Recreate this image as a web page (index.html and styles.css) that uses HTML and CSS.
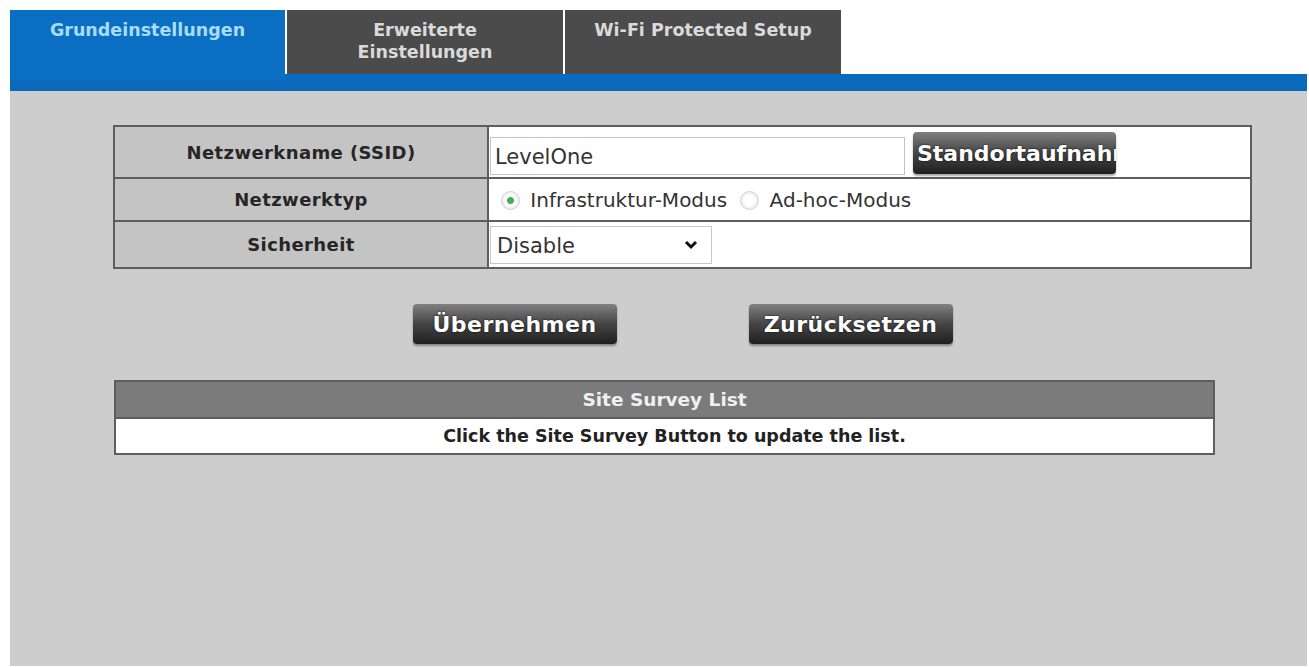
FILE: index.html
```html
<!DOCTYPE html>
<html lang="de">
<head>
    <meta charset="UTF-8">
    <title>Wireless Grundeinstellungen</title>
    <link rel="stylesheet" href="styles.css">
</head>
<body>
    <div class="page">
        <div class="tabs">
            <div class="tab active">Grundeinstellungen</div>
            <div class="tab">Erweiterte<br>Einstellungen</div>
            <div class="tab">Wi-Fi Protected Setup</div>
        </div>
        <div class="tab-bar"></div>

        <div class="content">
            <table class="settings">
                <tr class="row-ssid">
                    <th>Netzwerkname (SSID)</th>
                    <td>
                        <div class="cell-flex">
                            <input type="text" class="ssid" value="LevelOne">
                            <button type="button" class="btn btn-survey"><span>Standortaufnahme</span></button>
                        </div>
                    </td>
                </tr>
                <tr class="row-type">
                    <th>Netzwerktyp</th>
                    <td>
                        <label class="radio"><input type="radio" name="mode" checked> Infrastruktur-Modus</label>
                        <label class="radio"><input type="radio" name="mode"> Ad-hoc-Modus</label>
                    </td>
                </tr>
                <tr class="row-sec">
                    <th>Sicherheit</th>
                    <td>
                        <span class="select-wrap">
                            <select class="security">
                                <option>Disable</option>
                                <option>WEP</option>
                                <option>WPA-PSK</option>
                            </select>
                            <svg class="chevron" width="14" height="10" viewBox="0 0 14 10"><path d="M2 2 L7 7 L12 2" fill="none" stroke="#111" stroke-width="3"/></svg>
                        </span>
                    </td>
                </tr>
            </table>

            <div class="actions">
                <button type="button" class="btn btn-big">Übernehmen</button>
                <button type="button" class="btn btn-big">Zurücksetzen</button>
            </div>

            <table class="survey">
                <tr><th>Site Survey List</th></tr>
                <tr><td>Click the Site Survey Button to update the list.</td></tr>
            </table>
        </div>
    </div>
</body>
</html>
```

FILE: styles.css
```css
body {
    margin: 0;
    background-color: #fff;
    font-family: "DejaVu Sans", Verdana, sans-serif;
}

.page {
    margin: 10px 2px 0 10px;
}

.tabs {
    display: flex;
    gap: 2px;
    height: 64px;
}

.tab {
    width: 276px;
    background-color: #4b4b4b;
    color: #dadada;
    font-weight: bold;
    font-size: 17.5px;
    line-height: 22px;
    text-align: center;
    padding-top: 9px;
    box-sizing: border-box;
}

.tab.active {
    width: 275px;
    background-color: #0a6fc3;
    color: #a9dcf8;
    height: 70px;
}

.tab-bar {
    height: 17px;
    background-color: #0a6bbd;
}

.content {
    background-color: #cdcdcd;
    height: 575px;
    padding: 34px 55px 0 103px;
    box-sizing: border-box;
}

.settings {
    width: 100%;
    border-collapse: collapse;
    border: 2px solid #5e5e5e;
}

.settings th,
.settings td {
    border: 2px solid #5e5e5e;
    padding: 0;
}

.settings th {
    width: 372px;
    background-color: #c4c4c4;
    color: #262626;
    font-size: 18px;
    letter-spacing: 0.4px;
}

.settings td {
    background-color: #fff;
    padding-left: 1px;
}

.row-ssid {
    height: 52px;
}

.row-type {
    height: 43px;
}

.row-sec {
    height: 47px;
}

.cell-flex {
    display: flex;
    align-items: center;
    gap: 8px;
}

.ssid {
    width: 415px;
    height: 38px;
    margin-top: 8px;
    box-sizing: border-box;
    border: 1px solid #c4c4c4;
    padding: 2px 4px 0;
    font-family: "DejaVu Sans", Verdana, sans-serif;
    font-size: 21px;
    color: #333;
}

.btn {
    background: linear-gradient(#808080, #454545 50%, #1f1f1f);
    color: #fff;
    border: none;
    border-radius: 4px;
    font-family: "DejaVu Sans", Verdana, sans-serif;
    font-weight: bold;
    text-shadow: 0 0 2px #000;
    box-shadow: 0 2px 2px rgba(0, 0, 0, 0.35);
    cursor: pointer;
}

.btn-survey {
    width: 203px;
    height: 42px;
    margin-top: 2px;
    padding: 0 0 0 4px;
    font-size: 22px;
    overflow: hidden;
    text-align: left;
}

.btn-survey span {
    display: block;
    white-space: nowrap;
}

.radio {
    font-size: 20px;
    color: #333;
    margin-left: 11px;
    vertical-align: middle;
}

.radio + .radio {
    margin-left: 8px;
}

.radio input {
    appearance: none;
    width: 19px;
    height: 19px;
    margin: 0 4px 0 0;
    border: 1px solid #d4d4d4;
    border-radius: 50%;
    background: radial-gradient(circle, #fff 0 5px, #e8e8e8 9px);
    vertical-align: -3px;
}

.radio input:checked {
    background: radial-gradient(circle, #3fae55 0 3px, #fff 4px 5px, #e8e8e8 9px);
}

.select-wrap {
    position: relative;
    display: inline-block;
    vertical-align: middle;
}

.security {
    appearance: none;
    width: 222px;
    height: 38px;
    border: 1px solid #c8c8c8;
    background-color: #fff;
    padding: 2px 6px 0;
    font-family: "DejaVu Sans", Verdana, sans-serif;
    font-size: 21px;
    color: #333;
}

.chevron {
    position: absolute;
    right: 14px;
    top: 14px;
    pointer-events: none;
}

.actions {
    display: flex;
    justify-content: center;
    gap: 132px;
    margin: 35px 0 36px;
}

.btn-big {
    width: 204px;
    height: 40px;
    font-size: 22px;
    letter-spacing: 0.5px;
}

.survey {
    width: 1101px;
    margin-left: 1px;
    border-collapse: collapse;
    border: 2px solid #5e5e5e;
    font-weight: bold;
    text-align: center;
}

.survey th {
    background-color: #7b7b7b;
    color: #f0f0f0;
    height: 35px;
    border-bottom: 2px solid #5e5e5e;
    padding: 0;
    font-size: 18.5px;
}

.survey td {
    background-color: #fff;
    color: #222;
    height: 34px;
    padding: 0 0 0 20px;
    font-size: 17.5px;
}
```
